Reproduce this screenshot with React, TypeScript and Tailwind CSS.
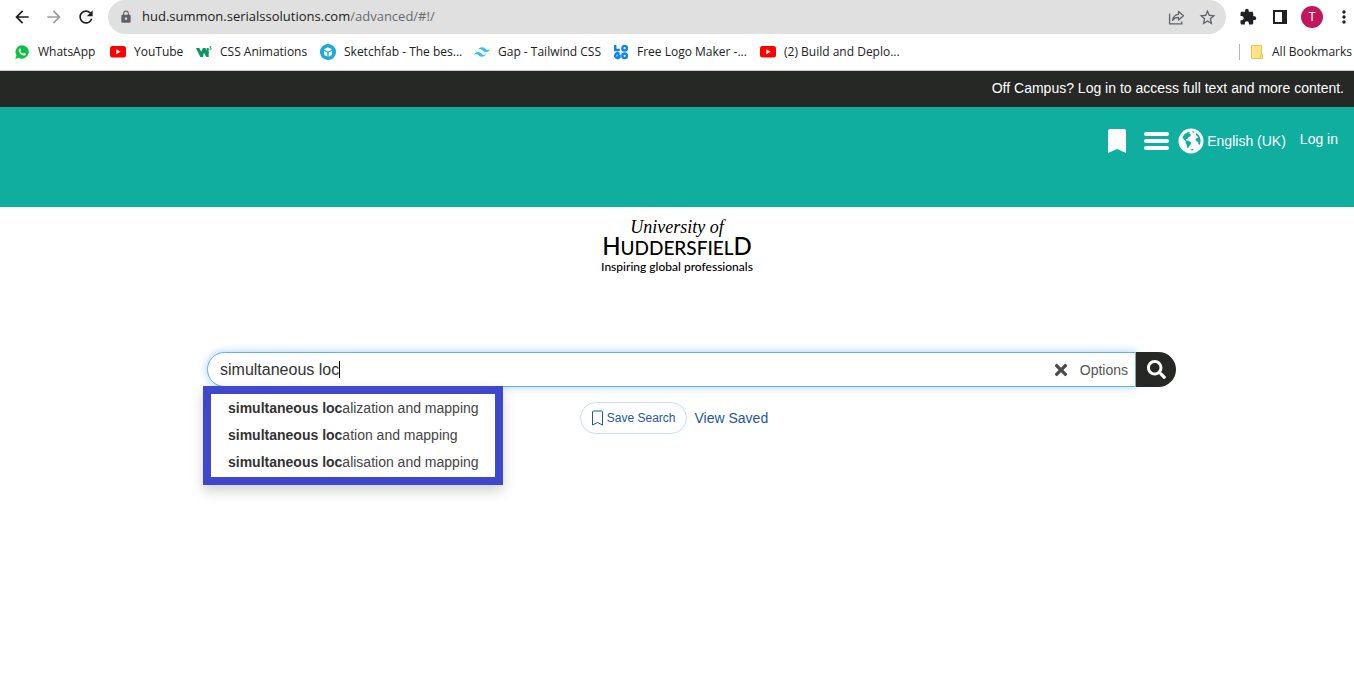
import React from "react";
import { FaSearch, FaTimes } from "react-icons/fa";
import { SiTailwindcss, SiSketchfab } from "react-icons/si";
import {
  MdArrowBack,
  MdArrowForward,
  MdExtension,
  MdLock,
  MdMoreVert,
  MdRefresh,
  MdStarBorder,
} from "react-icons/md";

function WhatsAppIcon() {
  return (
    <svg viewBox="0 0 16 16" className="size-4">
      <path d="M8.200 1.200a6.700 6.700 0 0 0-5.700 10.200L1.200 15l3.700-1.200A6.700 6.700 0 1 0 8.200 1.200z" fill="#0cc143" />
      <path
        d="M5.800 4.400c-.9.4-1.300 1.300-.9 2.500.8 2.300 2.300 3.900 4.600 4.600 1.100.3 2-.2 2.300-1.100l.1-.7-1.800-.9-.9 1c-1.300-.5-2.300-1.400-2.900-2.800l.7-.8-.7-1.800z"
        fill="#fff"
      />
    </svg>
  );
}

function YouTubeIcon() {
  return (
    <svg viewBox="0 0 16 12" className="h-3 w-4">
      <rect width="16" height="11.500" rx="2.500" fill="#f00" />
      <path d="M6.300 3.300v5l4.300-2.500z" fill="#fff" />
    </svg>
  );
}

function W3Icon() {
  return (
    <svg viewBox="0 0 16 16" className="size-4" fill="#059862">
      <path d="M0 4h3.300l2 3.800L6.800 4h2.600c1.500 2.200 2 3.200 3.300 4.800V13h-2.300L7.900 8.800 6.900 13H4.300z" />
      <path d="M10.700 4h2v5h-1.300z" />
      <path d="M13.500 2.800h1.700l-1 1.200q1.300.1 1 1.200-.5 1-1.700.5" fill="none" stroke="#059862" strokeWidth="0.900" />
    </svg>
  );
}

function SketchfabIcon() {
  return <SiSketchfab className="size-4 text-[#1caad9]" />;
}

function TailwindIcon() {
  return <SiTailwindcss className="size-4 text-[#38bdf8]" />;
}

function LogoMakerIcon() {
  return (
    <svg viewBox="0 0 16 16" className="size-4" fill="none" stroke="#0b84f3" strokeWidth="2.400">
      <path d="M2.200 1v5h4.600" />
      <circle cx="11.600" cy="4.200" r="2.300" />
      <path d="M6.300 9.800a2.400 2.400 0 1 0 .2 3.400v-1.500H4.400" />
      <circle cx="11.600" cy="11.800" r="2.300" />
    </svg>
  );
}

function ShareIcon() {
  return (
    <svg viewBox="0 0 18 18" className="size-[18px]" fill="none" stroke="#5f6368" strokeWidth="1.300">
      <path d="M1.600 5.500v10.400h12.200v-2.500" />
      <path d="M4.500 12.300c.7-3.800 2.800-5.700 6-6V3.500l5 4.300-5 4.200V9.400c-2.700 0-4.600.9-6 2.900z" strokeLinejoin="round" />
    </svg>
  );
}

function SidePanelIcon() {
  return (
    <svg viewBox="0 0 14 14" className="size-[14px]">
      <path d="M0 0h14v14H0zM2 2v10h7V2z" fill="#202124" fillRule="evenodd" />
    </svg>
  );
}

function FolderIcon() {
  return (
    <svg viewBox="0 0 14 16" className="h-4 w-[14px]">
      <path d="M1.500 1.500h10v9h1v4h-11z" fill="#ffe28a" stroke="#e8c648" />
      <path d="M10.500 14.500v-3q0-1 1-1t1 1v3z" fill="#ffe28a" stroke="#e8c648" />
    </svg>
  );
}

function GlobeIcon() {
  return (
    <svg viewBox="0 0 26 26" className="size-[26px]">
      <circle cx="13" cy="13" r="12.500" fill="#fff" />
      <path
        d="M4.500 9.500C5.500 7 7.200 5.200 9.500 4.200l2.700.2-.7 1.300 1.500 1-.7 1.600-1.900 1-.9 1.500-1.500.4.300 1.200 2.300.4 2.900 1.800-1.200 2.400-1.300 1.200-.9 2.300-1-.9-.4-2.900-1.200-1.700.3-1.700-1.800-1.500z"
        fill="#10ae9f"
      />
      <path
        d="M18.200 4.900l2.500 2.100 1.500 2.900.4 2.900-.4 3-1 1.300-.9-1.400-.2-2-1.700-.4-.9-1.500 1.200-1.700 1.500-.4-.9-1.600-1.400-.8z"
        fill="#10ae9f"
      />
      <path d="M13.500 4l1.500-.7 1.700.4-1.200 1.100z" fill="#10ae9f" />
      <path d="M12 21.500l2.700-.6 1.500.4-1.800 1.100z" fill="#10ae9f" />
    </svg>
  );
}

const bookmarks = [
  { label: "WhatsApp", Icon: WhatsAppIcon, width: "w-24" },
  { label: "YouTube", Icon: YouTubeIcon, width: "w-[86px]" },
  { label: "CSS Animations", Icon: W3Icon, width: "w-[124px]" },
  { label: "Sketchfab - The bes...", Icon: SketchfabIcon, width: "w-[154px]" },
  { label: "Gap - Tailwind CSS", Icon: TailwindIcon, width: "w-[139px]" },
  { label: "Free Logo Maker -...", Icon: LogoMakerIcon, width: "w-[147px]" },
  { label: "(2) Build and Deplo...", Icon: YouTubeIcon, width: "w-[150px]" },
];

const suggestions = ["alization and mapping", "ation and mapping", "alisation and mapping"];

function BrowserBar() {
  return (
    <header className="border-b border-[#c8ccc8] bg-white font-['Open_Sans',sans-serif] text-[#202124]">
      <div className="flex h-[34px] items-center">
        <div className="flex w-[108px] shrink-0 items-center gap-3 pl-3">
          <button type="button" aria-label="Back">
            <MdArrowBack className="size-5" />
          </button>
          <button type="button" aria-label="Forward">
            <MdArrowForward className="size-5 text-[#9b9da0]" />
          </button>
          <button type="button" aria-label="Reload">
            <MdRefresh className="size-5" />
          </button>
        </div>
        <div className="flex h-full min-w-0 flex-1 items-center rounded-full bg-[#e0e0e0] pr-[9px] pl-[11px]">
          <MdLock className="size-[14px] shrink-0 text-[#5f6368]" />
          <p className="ml-[9px] flex-1 truncate text-[13px]">
            hud.summon.serialssolutions.com<span className="text-[#696b6e]">/advanced/#!/</span>
          </p>
          <div className="flex items-center gap-3 text-[#5f6368]">
            <button type="button" aria-label="Share">
              <ShareIcon />
            </button>
            <button type="button" aria-label="Bookmark this page">
              <MdStarBorder className="size-[19px]" />
            </button>
          </div>
        </div>
        <div className="flex w-32 shrink-0 items-center pl-[13px]">
          <button type="button" aria-label="Extensions">
            <MdExtension className="size-[18px]" />
          </button>
          <button type="button" aria-label="Side panel" className="ml-4">
            <SidePanelIcon />
          </button>
          <button
            type="button"
            className="ml-[14px] flex size-[22px] shrink-0 items-center justify-center rounded-full bg-[#c2185b] font-[Roboto,sans-serif] text-xs text-white"
          >
            T
          </button>
          <button type="button" aria-label="Menu" className="ml-[11px] shrink-0">
            <MdMoreVert className="size-5" />
          </button>
        </div>
      </div>
      <nav className="flex h-9 items-center pl-[14px] text-xs">
        {bookmarks.map(({ label, Icon, width }) => (
          <a key={label} href="#" className={`flex shrink-0 items-center gap-2 whitespace-nowrap ${width}`}>
            <span className="flex w-4 shrink-0 justify-center">
              <Icon />
            </span>
            {label}
          </a>
        ))}
        <a href="#" className="ml-auto flex items-center whitespace-nowrap border-l border-[#b4b6b8] pr-[2px] pl-[10px]">
          <FolderIcon />
          <span className="ml-2">All Bookmarks</span>
        </a>
      </nav>
    </header>
  );
}

function UniversityLogo() {
  return (
    <a href="#" className="flex flex-col items-center text-black">
      <span className="font-['Liberation_Serif',serif] text-lg leading-5 italic">University of</span>
      <span className="font-[Lato,sans-serif] text-[19px] leading-[18px] font-medium">
        <span className="text-2xl leading-[18px]">H</span>UDDERSFIEL
        <span className="text-2xl leading-[18px]">D</span>
      </span>
      <span className="mt-[2px] font-[Lato,sans-serif] text-xs leading-4 font-medium">
        Inspiring global professionals
      </span>
    </a>
  );
}

function SearchBox() {
  return (
    <div className="relative">
      <form className="flex h-[35px]" onSubmit={(e) => e.preventDefault()}>
        <div className="flex min-w-0 flex-1 items-center rounded-l-full border border-[#66afe9] bg-white pr-[7px] pl-3 shadow-[0_0_8px_rgba(102,175,233,0.6)]">
          <input
            type="text"
            aria-label="Search"
            defaultValue="simultaneous loc"
            className="min-w-0 flex-1 bg-transparent text-base text-[#333] outline-none"
          />
          <button type="button" aria-label="Clear search">
            <FaTimes className="size-[18px] text-[#4a4a4a]" />
          </button>
          <button type="button" className="ml-[10px] text-sm text-[#555]">
            Options
          </button>
        </div>
        <button
          type="submit"
          aria-label="Search"
          className="flex w-10 items-center justify-center rounded-r-full bg-[#262825] text-white"
        >
          <FaSearch className="size-[19px]" />
        </button>
      </form>
      <span className="absolute top-[9px] left-[132px] h-[17px] w-px bg-black" />
      <ul className="absolute top-[34px] -left-1 w-[300px] border-8 border-[#3f48cc] bg-white py-px shadow-[0_6px_12px_rgba(0,0,0,0.18)]">
        {suggestions.map((rest) => (
          <li key={rest}>
            <a href="#" className="block pl-[17px] text-sm leading-[27px] whitespace-nowrap text-[#444]">
              <b className="text-[#333]">simultaneous loc</b>
              {rest}
            </a>
          </li>
        ))}
      </ul>
    </div>
  );
}

export default function App() {
  return (
    <div className="min-h-screen bg-white font-['Liberation_Sans',Arial,sans-serif]">
      <BrowserBar />
      <div className="flex h-9 items-center justify-end bg-[#262825] pr-[10px] pb-[2px] text-sm text-white">
        <a href="#">Off Campus? Log in to access full text and more content.</a>
      </div>
      <div className="flex h-[100px] items-start justify-end bg-[#10ae9f] pt-5 pr-4 text-sm text-white">
        <div className="flex h-7 items-center">
          <button type="button" aria-label="Saved items">
            <svg viewBox="0 0 18 24" className="h-6 w-[18px]">
              <path d="M2 0h14q2 0 2 2v22l-9-4-9 4V2q0-2 2-2z" fill="#fff" />
            </svg>
          </button>
          <button type="button" aria-label="Menu" className="ml-[18px] flex w-[25px] flex-col gap-[3px]">
            <span className="h-1 rounded-sm bg-white" />
            <span className="h-1 rounded-sm bg-white" />
            <span className="h-1 rounded-sm bg-white" />
          </button>
          <button type="button" className="ml-[9px] flex items-center gap-[3px]">
            <GlobeIcon />
            English (UK)
          </button>
        </div>
        <a href="#" className="ml-[14px] leading-6">
          Log in
        </a>
      </div>
      <main>
        <div className="flex justify-center pt-[10px]">
          <UniversityLogo />
        </div>
        <div className="mx-auto mt-[77px] max-w-[998px] pl-[29px]">
          <SearchBox />
        </div>
        <div className="mt-[15px] flex items-center justify-center gap-2 pr-[6px] text-[#1f55a5]">
          <button
            type="button"
            className="flex h-8 items-center gap-[3px] rounded-full border border-[#c5defa] px-[10px] text-xs"
          >
            <svg viewBox="0 0 13 16" className="h-4 w-[13px]" fill="none" stroke="#1f55a5">
              <path d="M1.500 2q0-1 1-1h8q1 0 1 1v13l-5-2.500-5 2.500z" />
            </svg>
            Save Search
          </button>
          <a href="#" className="text-sm">
            View Saved
          </a>
        </div>
      </main>
    </div>
  );
}
